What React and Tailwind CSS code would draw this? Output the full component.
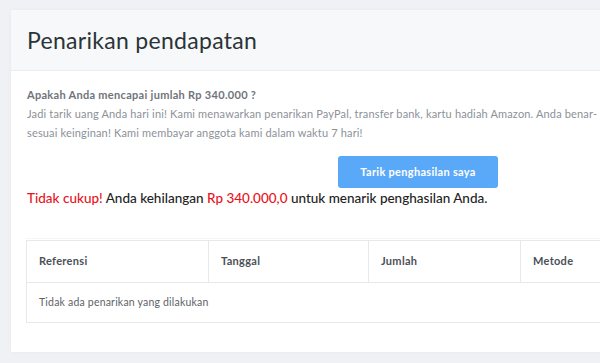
import React from 'react';

const font = { fontFamily: 'Lato, "Open Sans", sans-serif' };

export default function App() {
    return (
        <div className="h-[363px] w-[600px] overflow-hidden bg-[#eff1f4] pt-[10px] pl-[11px]" style={font}>
            <div className="w-[640px] bg-white shadow-[0_0_4px_rgba(0,0,0,0.04)]">
                <div className="h-[61px] flex items-center pl-[16px] bg-[#f7f8f9] border-b border-[#ebedf0]">
                    <h1 className="text-[23px] text-[#2b3437] tracking-[0.3px]">Penarikan pendapatan</h1>
                </div>
                <div className="pl-[16px] pt-[14px] pb-[29px]">
                    <p className="text-[11px] leading-[19px] font-bold text-[#6f747a] tracking-[0.3px]">Apakah Anda mencapai jumlah Rp 340.000 ?</p>
                    <p className="text-[11px] leading-[19px] text-[#8c9198] whitespace-nowrap tracking-[0.16px]">Jadi tarik uang Anda hari ini! Kami menawarkan penarikan PayPal, transfer bank, kartu hadiah Amazon. Anda benar-</p>
                    <p className="text-[11px] leading-[19px] text-[#8c9198] whitespace-nowrap tracking-[0.16px]">sesuai keinginan! Kami membayar anggota kami dalam waktu 7 hari!</p>
                    <div className="flex mt-[14px] pl-[311px]">
                        <button className="w-[160px] h-[32px] rounded-[3px] bg-[#5aa9f9] text-white text-[11px] font-bold tracking-[0.3px]">Tarik penghasilan saya</button>
                    </div>
                    <p className="text-[13.5px] leading-[20px] text-[#222] whitespace-nowrap font-medium">
                        <span className="text-[#e8131b]">Tidak cukup!</span> Anda kehilangan <span className="text-[#e8131b]">Rp 340.000,0</span> untuk menarik penghasilan Anda.
                    </p>
                    <div className="mt-[30px] border-t border-[#f4f5f7] pt-[1px] -ml-[1px]">
                        <table className="border border-[#e6e8eb] border-collapse w-[640px] text-left">
                            <thead>
                                <tr className="h-[42px]">
                                    <th className="w-[182px] pl-[12px] text-[11px] font-bold tracking-[0.3px] text-[#4b5057] border-r border-[#e6e8eb]">Referensi</th>
                                    <th className="w-[160px] pl-[12px] text-[11px] font-bold tracking-[0.3px] text-[#4b5057] border-r border-[#e6e8eb]">Tanggal</th>
                                    <th className="w-[152px] pl-[12px] text-[11px] font-bold tracking-[0.3px] text-[#4b5057] border-r border-[#e6e8eb]">Jumlah</th>
                                    <th className="pl-[12px] text-[11px] font-bold tracking-[0.3px] text-[#4b5057]">Metode</th>
                                </tr>
                            </thead>
                            <tbody>
                                <tr className="h-[40px] border-t border-[#e6e8eb]">
                                    <td colSpan={4} className="pl-[12px] text-[10.5px] tracking-[0.2px] text-[#5d6268]">Tidak ada penarikan yang dilakukan</td>
                                </tr>
                            </tbody>
                        </table>
                    </div>
                </div>
            </div>
        </div>
    );
}
